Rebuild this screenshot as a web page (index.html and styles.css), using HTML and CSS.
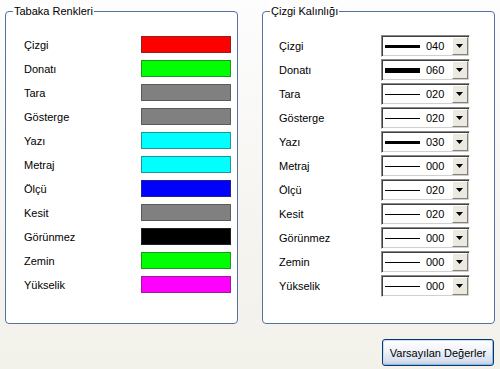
FILE: index.html
```html
<!DOCTYPE html>
<html lang="tr">
<head>
  <meta charset="UTF-8">
  <title>Tabaka Ayarları</title>
  <link rel="stylesheet" href="styles.css">
</head>
<body>
  <div class="panels">
    <fieldset class="group">
      <legend>Tabaka Renkleri</legend>
      <ul class="rows">
        <li><span>Çizgi</span><i class="swatch red"></i></li>
        <li><span>Donatı</span><i class="swatch green"></i></li>
        <li><span>Tara</span><i class="swatch gray"></i></li>
        <li><span>Gösterge</span><i class="swatch gray"></i></li>
        <li><span>Yazı</span><i class="swatch cyan"></i></li>
        <li><span>Metraj</span><i class="swatch cyan"></i></li>
        <li><span>Ölçü</span><i class="swatch blue"></i></li>
        <li><span>Kesit</span><i class="swatch gray"></i></li>
        <li><span>Görünmez</span><i class="swatch black"></i></li>
        <li><span>Zemin</span><i class="swatch green"></i></li>
        <li><span>Yükselik</span><i class="swatch magenta"></i></li>
      </ul>
    </fieldset>

    <fieldset class="group">
      <legend>Çizgi Kalınlığı</legend>
      <ul class="rows combos">
        <li><span>Çizgi</span><div class="combo"><i class="line w3"></i><b>040</b><em class="drop"></em></div></li>
        <li><span>Donatı</span><div class="combo"><i class="line w5"></i><b>060</b><em class="drop"></em></div></li>
        <li><span>Tara</span><div class="combo"><i class="line w1"></i><b>020</b><em class="drop"></em></div></li>
        <li><span>Gösterge</span><div class="combo"><i class="line w1"></i><b>020</b><em class="drop"></em></div></li>
        <li><span>Yazı</span><div class="combo"><i class="line w3"></i><b>030</b><em class="drop"></em></div></li>
        <li><span>Metraj</span><div class="combo"><i class="line w1"></i><b>000</b><em class="drop"></em></div></li>
        <li><span>Ölçü</span><div class="combo"><i class="line w1"></i><b>020</b><em class="drop"></em></div></li>
        <li><span>Kesit</span><div class="combo"><i class="line w1"></i><b>020</b><em class="drop"></em></div></li>
        <li><span>Görünmez</span><div class="combo"><i class="line w1"></i><b>000</b><em class="drop"></em></div></li>
        <li><span>Zemin</span><div class="combo"><i class="line w1"></i><b>000</b><em class="drop"></em></div></li>
        <li><span>Yükselik</span><div class="combo"><i class="line w1"></i><b>000</b><em class="drop"></em></div></li>
      </ul>
    </fieldset>
  </div>

  <div class="footer">
    <button class="btn">Varsayılan Değerler</button>
  </div>
</body>
</html>
```

FILE: styles.css
```css
html, body {
  margin: 0;
  padding: 0;
}

body {
  width: 500px;
  height: 369px;
  overflow: hidden;
  font-family: "Liberation Sans", Arial, sans-serif;
  font-size: 11px;
  color: #000;
  background: linear-gradient(#fdfdfe, #f4f3ee 70%, #f2f1ea);
}

.panels {
  display: flex;
  gap: 24px;
  padding: 5px 0 0 5px;
}

.group {
  box-sizing: border-box;
  width: 233px;
  height: 319px;
  margin: 0;
  padding: 0;
  border: 1px solid #56709f;
  border-radius: 4px;
  background: #fff;
  min-width: 0;
}

.group legend {
  margin-left: 7px;
  padding: 0 1px;
  line-height: 13px;
  background: #fff;
}

.rows {
  list-style: none;
  margin: 0;
  padding: 18px 0 0 18px;
  display: flex;
  flex-direction: column;
  gap: 7px;
}

.rows li {
  display: flex;
  align-items: center;
  height: 17px;
}

.rows li span {
  flex: 1;
}

.swatch {
  display: block;
  box-sizing: border-box;
  width: 90px;
  height: 17px;
  margin-right: 6px;
  border: 1px solid rgba(60, 60, 60, 0.55);
}

.red { background: #ff0000; }
.green { background: #00ff00; }
.gray { background: #808080; }
.cyan { background: #00ffff; }
.blue { background: #0000ff; }
.black { background: #000000; }
.magenta { background: #ff00ff; }

.combos {
  padding: 17px 0 0 16px;
  gap: 2px;
}

.combos li {
  height: 22px;
}

.combo {
  box-sizing: border-box;
  display: flex;
  align-items: center;
  width: 89px;
  height: 22px;
  margin-right: 24px;
  background: #fff;
  border: 1px solid;
  border-color: #8a8a8a #ffffff #ffffff #8a8a8a;
  box-shadow: inset 1px 1px 0 #404040, inset -1px -1px 0 #d4d0c8;
  padding: 1px;
}

.line {
  display: block;
  width: 35px;
  margin-left: 2px;
  background: #000;
}

.w1 { height: 1px; }
.w3 { height: 3px; }
.w5 { height: 5px; }

.combo b {
  font-weight: normal;
  margin-left: 6px;
  line-height: 11px;
}

.drop {
  box-sizing: border-box;
  position: relative;
  width: 16px;
  height: 18px;
  margin-left: auto;
  background: #ece9e0;
  border: 1px solid;
  border-color: #ffffff #808080 #808080 #ffffff;
}

.drop::after {
  content: "";
  position: absolute;
  left: 3px;
  top: 6px;
  width: 7px;
  height: 4px;
  background: #000;
  clip-path: polygon(0 0, 100% 0, 50% 100%);
}

.footer {
  display: flex;
  justify-content: flex-end;
  padding: 15px 6px 0 0;
}

.btn {
  width: 112px;
  height: 27px;
  padding: 0;
  font-family: "Liberation Sans", Arial, sans-serif;
  font-size: 11px;
  color: #000;
  border: 1px solid #003c74;
  border-radius: 3px;
  background: linear-gradient(#ffffff, #eef2f8 45%, #d5dfee 85%, #b9c9e4);
  box-shadow: inset 1px 1px 0 #cfdcf2, inset -1px -1px 0 #9fb6dd;
}
```
